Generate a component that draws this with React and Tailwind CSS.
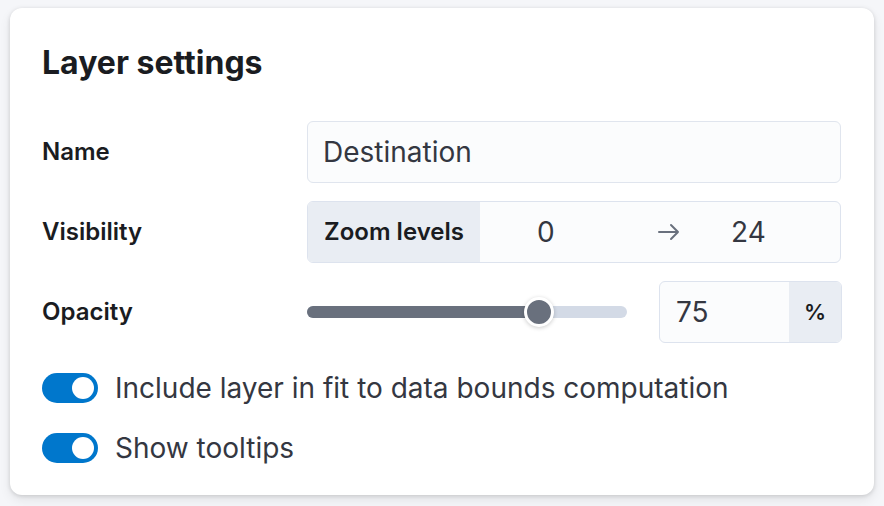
import { useState } from "react";

const Toggle = ({ on, onClick }) => (
  <button
    type="button"
    onClick={onClick}
    className={`relative h-[30px] w-[56px] shrink-0 rounded-full ${on ? "bg-[#0077cc]" : "bg-[#98a2b3]"}`}
  >
    <span
      className={`absolute top-[4px] h-[22px] w-[22px] rounded-full bg-white ${on ? "left-[30px]" : "left-[4px]"}`}
    />
  </button>
);

export default function App() {
  const [fit, setFit] = useState(true);
  const [tips, setTips] = useState(true);

  return (
    <div className="min-h-[506px] bg-[#f5f6f9] pt-[8px] pl-[10px] font-['Inter',sans-serif]">
      <div className="w-[864px] rounded-[12px] bg-white px-[32px] pt-[35px] pb-[32px] shadow-[0_1px_4px_rgba(0,0,0,0.14),0_5px_12px_rgba(0,0,0,0.08)]">
        <h2 className="text-[32px] leading-[40px] font-bold text-[#1a1c21]">Layer settings</h2>

        <div className="mt-[38px] flex flex-col gap-[18px]">
          <div className="flex items-center">
            <div className="w-[265px] text-[24px] leading-[30px] font-semibold text-[#1a1c21]">Name</div>
            <div className="flex h-[62px] w-[534px] items-center rounded-[6px] border border-[#e0e5ee] bg-[#fbfcfd] px-[15px] text-[28px] text-[#343741]">
              Destination
            </div>
          </div>

          <div className="flex items-center">
            <div className="w-[265px] text-[24px] leading-[30px] font-semibold text-[#1a1c21]">Visibility</div>
            <div className="flex h-[62px] w-[534px] items-center overflow-hidden rounded-[6px] border border-[#dde3ee] bg-[#fbfcfd] text-[28px] text-[#343741]">
              <div className="flex h-full w-[172px] items-center justify-center bg-[#e9edf3] text-[24px] font-semibold text-[#1a1c21]">
                Zoom levels
              </div>
              <span className="ml-[57px] w-[18px]">0</span>
              <span className="ml-[102px] text-[#69707d]">
                <svg width="24" height="20" viewBox="0 0 24 20" fill="none" stroke="currentColor" strokeWidth="2" strokeLinecap="round" strokeLinejoin="round">
                  <path d="M2 10h19M14 3l7 7-7 7" />
                </svg>
              </span>
              <span className="ml-[50px]">24</span>
            </div>
          </div>

          <div className="flex items-center">
            <div className="w-[265px] text-[24px] leading-[30px] font-semibold text-[#1a1c21]">Opacity</div>
            <div className="relative h-[12px] w-[320px] rounded-full bg-[#d3dae6]">
              <div className="h-full w-[232px] rounded-full bg-[#69707d]" />
              <div className="absolute top-[-9px] left-[217px] h-[30px] w-[30px] rounded-full border-[3px] border-white bg-[#69707d] shadow-[0_1px_4px_rgba(0,0,0,0.2)]" />
            </div>
            <div className="ml-[32px] flex h-[62px] w-[183px] items-center overflow-hidden rounded-[6px] border border-[#dde3ee] bg-[#fbfcfd] text-[28px] text-[#343741]">
              <span className="flex-1 pl-[16px]">75</span>
              <div className="flex h-full w-[52px] items-center justify-center bg-[#e9edf3] text-[22px] font-semibold text-[#1a1c21]">
                %
              </div>
            </div>
          </div>
        </div>

        <div className="mt-[30px] flex flex-col gap-[30px]">
          <label className="flex items-center gap-[17px] text-[28px] leading-[30px] text-[#343741]">
            <Toggle on={fit} onClick={() => setFit(!fit)} />
            Include layer in fit to data bounds computation
          </label>
          <label className="flex items-center gap-[17px] text-[28px] leading-[30px] text-[#343741]">
            <Toggle on={tips} onClick={() => setTips(!tips)} />
            Show tooltips
          </label>
        </div>
      </div>
    </div>
  );
}
